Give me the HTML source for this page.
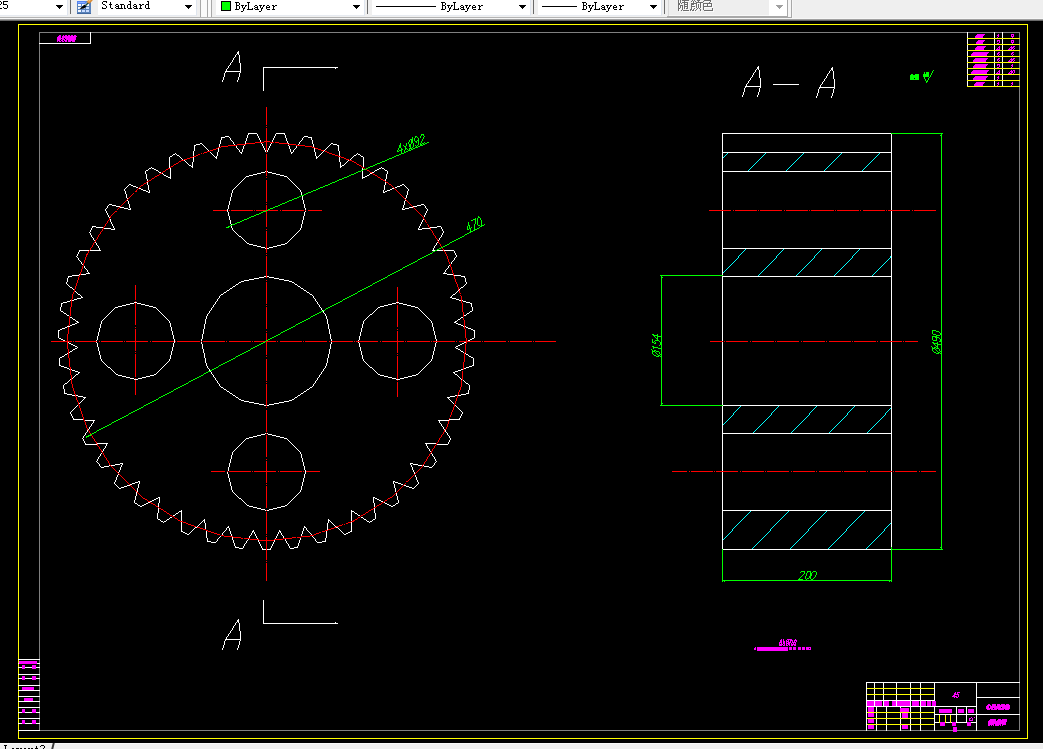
<!DOCTYPE html>
<html><head><meta charset="utf-8"><title>CAD</title>
<style>
html,body{margin:0;padding:0;background:#000;width:1043px;height:749px;overflow:hidden;font-family:"Liberation Sans",sans-serif;}
#cad{position:absolute;left:0;top:0;}
#tb{position:absolute;left:0;top:0;width:1043px;height:21px;overflow:hidden;background:linear-gradient(#efefef 0,#efefef 18px,#f6f6f6 18px,#f6f6f6 19px,#a0a0a0 19px,#a0a0a0 20px,#696969 20px,#696969 21px);}
#tb .cb{position:absolute;top:0;height:15px;background:#fff;border-right:1px solid #dfe5ee;border-bottom:1px solid #e6eaf0;box-sizing:content-box}
#tb .ul{position:absolute;left:0;top:17px;width:792px;height:1px;background:#b4b4b4}
#tb .sep{position:absolute;top:0;width:1px;height:14px;background:#6a6a6a}
#tb .grip{position:absolute;top:0;width:1px;height:17px;background:#a8a8a8}
#tb .gw{position:absolute;top:0;height:17px;background:#fafafa}
#tb .ar{position:absolute;top:5px}
#bb{position:absolute;left:0;top:743px;width:1043px;height:6px;background:linear-gradient(#f8f8f8 0,#f8f8f8 1px,#efefef 1px);overflow:hidden}
#bb .tab{position:absolute;left:52px;top:0;width:2px;height:6px;background:#3a3a3a;transform:skewX(-14deg)}
</style></head><body>
<svg id="cad" width="1043" height="749" viewBox="0 0 1043 749" shape-rendering="crispEdges" stroke-width="1" fill="none">
<path stroke="#ffff00" d="M18 24.5h1010M967 38.5h53M967 44.5h53M967 50.5h53M967 56.5h53M967 62.5h53M967 68.5h53M967 74.5h53M967 80.5h53M967 86.5h53M867 688.5h67M867 694.5h67M867 712.5h67M867 718.5h67M867 724.5h67M18 738.5h1010M18.5 25v634M18.5 660v3M18.5 664v3M18.5 668v6M18.5 675v3M18.5 679v6M18.5 686v4M18.5 691v5M18.5 697v4M18.5 702v5M18.5 708v4M18.5 713v5M18.5 719v4M18.5 724v6M18.5 731v7M939.5 715v8M945.5 715v8M950.5 715v8M1027.5 25v713"/>
<path stroke="#808080" d="M39 32.5h51M91 32.5h876M968 32.5h26M995 32.5h7M1003 32.5h17M40 730.5h826M867 730.5h9M877 730.5h9M887 730.5h13M901 730.5h9M911 730.5h9M921 730.5h13M935 730.5h18M957 730.5h19M977 730.5h43M39.5 33v10M39.5 44v615M39.5 660v3M39.5 664v3M39.5 668v6M39.5 675v3M39.5 679v6M39.5 686v4M39.5 691v5M39.5 697v4M39.5 702v5M39.5 708v4M39.5 713v5M39.5 719v4M39.5 724v6M1019.5 33v5M1019.5 39v5M1019.5 45v5M1019.5 51v5M1019.5 57v5M1019.5 63v5M1019.5 69v5M1019.5 75v5M1019.5 81v5M1019.5 87v595M1019.5 683v14M1019.5 698v16M1019.5 715v15"/>
<path stroke="#ffffff" d="M39 43.5h52M237 52.5h2M237 53.5h2M263 67.5h75M757 67.5h2M757 68.5h2M831 68.5h2M831 69.5h2M225 71.5h16M773 84.5h26M745 86.5h16M819 87.5h16M248 133.5h9M276 133.5h9M722 133.5h169M225 136.5h4M304 136.5h4M221 137.5h4M308 137.5h4M200 143.5h2M331 143.5h2M196 144.5h4M333 144.5h4M194 145.5h2M337 145.5h2M240 152.5h2M291 152.5h2M722 152.5h170M173 154.5h2M358 154.5h2M177 155.5h2M354 155.5h2M170 156.5h2M361 156.5h2M215 157.5h2M316 157.5h2M189 165.5h2M342 165.5h2M191 166.5h2M340 166.5h2M149 168.5h2M152 168.5h2M379 168.5h2M382 168.5h2M154 169.5h2M377 169.5h2M146 170.5h2M156 170.5h2M375 170.5h2M385 170.5h2M722 171.5h170M159 172.5h2M261 172.5h4M268 172.5h4M372 172.5h2M257 173.5h4M272 173.5h4M370 173.5h2M253 174.5h4M276 174.5h4M164 175.5h2M249 175.5h4M280 175.5h4M367 175.5h2M166 176.5h2M246 176.5h3M284 176.5h3M365 176.5h2M168 177.5h3M362 177.5h3M129 184.5h2M402 184.5h2M131 185.5h2M400 185.5h2M133 186.5h3M397 186.5h3M136 187.5h2M395 187.5h2M139 188.5h2M392 188.5h2M141 189.5h2M390 189.5h2M143 190.5h3M387 190.5h3M146 191.5h2M385 191.5h2M148 192.5h2M383 192.5h2M109 204.5h3M421 204.5h3M112 205.5h4M417 205.5h4M116 206.5h4M413 206.5h4M120 207.5h4M409 207.5h4M124 208.5h4M405 208.5h4M128 209.5h3M402 209.5h3M92 226.5h4M437 226.5h4M96 227.5h7M430 227.5h7M104 228.5h7M422 228.5h8M111 229.5h4M418 229.5h4M239 236.5h2M247 243.5h2M285 243.5h2M249 244.5h4M281 244.5h4M253 245.5h4M277 245.5h4M257 246.5h4M273 246.5h4M261 247.5h4M269 247.5h4M267 248.5h2M722 248.5h170M79 250.5h10M90 250.5h11M432 250.5h3M437 250.5h6M444 250.5h10M86 273.5h4M443 273.5h4M81 274.5h5M447 274.5h6M72 275.5h7M454 275.5h7M68 276.5h4M264 276.5h2M267 276.5h2M461 276.5h4M722 276.5h170M259 277.5h5M269 277.5h5M254 278.5h5M274 278.5h5M249 279.5h5M279 279.5h5M244 280.5h5M284 280.5h5M241 281.5h3M289 281.5h3M239 282.5h2M292 282.5h2M236 284.5h2M295 284.5h2M233 286.5h2M298 286.5h2M70 287.5h2M461 287.5h2M230 288.5h2M301 288.5h2M227 290.5h2M304 290.5h2M224 292.5h2M307 292.5h2M78 294.5h2M221 294.5h2M310 294.5h2M453 294.5h2M81 297.5h2M450 297.5h2M77 298.5h4M452 298.5h4M74 299.5h3M456 299.5h3M72 300.5h2M459 300.5h2M67 301.5h3M463 301.5h3M63 302.5h4M134 302.5h3M396 302.5h3M466 302.5h4M61 303.5h2M130 303.5h4M137 303.5h4M392 303.5h4M399 303.5h4M470 303.5h2M126 304.5h4M141 304.5h4M388 304.5h4M403 304.5h4M122 305.5h4M145 305.5h4M384 305.5h4M407 305.5h4M118 306.5h4M149 306.5h4M380 306.5h4M411 306.5h4M115 307.5h3M153 307.5h3M378 307.5h2M415 307.5h3M61 311.5h2M470 311.5h2M64 313.5h2M467 313.5h2M370 314.5h2M67 315.5h2M464 315.5h2M70 317.5h2M461 317.5h2M73 319.5h2M458 319.5h2M76 321.5h2M455 321.5h2M77 322.5h2M454 322.5h2M75 323.5h2M456 323.5h2M72 324.5h3M458 324.5h3M70 325.5h2M461 325.5h2M67 326.5h3M65 327.5h2M466 327.5h2M62 328.5h3M468 328.5h3M60 329.5h2M471 329.5h2M58 330.5h2M473 330.5h2M59 338.5h2M472 338.5h2M61 339.5h2M470 339.5h2M63 340.5h2M468 340.5h2M464 342.5h2M69 343.5h2M462 343.5h2M71 344.5h2M460 344.5h2M73 345.5h2M458 345.5h2M75 346.5h2M456 346.5h2M75 348.5h2M456 348.5h2M73 349.5h2M458 349.5h2M70 351.5h2M461 351.5h2M65 354.5h2M466 354.5h2M62 356.5h2M469 356.5h2M60 357.5h2M471 357.5h2M59 365.5h2M472 365.5h2M61 366.5h3M469 366.5h3M64 367.5h3M108 367.5h2M370 367.5h2M466 367.5h3M67 368.5h2M464 368.5h2M461 369.5h2M72 370.5h3M458 370.5h3M75 371.5h3M455 371.5h3M78 372.5h2M453 372.5h2M76 374.5h2M116 374.5h2M154 374.5h2M378 374.5h2M416 374.5h2M455 374.5h2M118 375.5h4M150 375.5h4M380 375.5h4M412 375.5h4M122 376.5h4M146 376.5h4M384 376.5h4M408 376.5h4M126 377.5h4M142 377.5h4M388 377.5h4M404 377.5h4M130 378.5h4M138 378.5h4M392 378.5h4M400 378.5h4M134 379.5h4M396 379.5h4M65 383.5h2M466 383.5h2M221 387.5h2M310 387.5h2M224 389.5h2M307 389.5h2M227 391.5h2M304 391.5h2M64 393.5h3M230 393.5h2M301 393.5h2M466 393.5h3M67 394.5h5M461 394.5h5M72 395.5h3M76 395.5h2M233 395.5h2M298 395.5h2M455 395.5h2M458 395.5h3M78 396.5h5M450 396.5h5M83 397.5h3M236 397.5h2M295 397.5h2M447 397.5h3M239 399.5h2M292 399.5h2M241 400.5h3M289 400.5h3M244 401.5h5M284 401.5h5M249 402.5h5M279 402.5h5M254 403.5h5M274 403.5h5M259 404.5h5M269 404.5h5M264 405.5h2M267 405.5h2M723 405.5h169M73 419.5h10M449 419.5h11M85 420.5h10M438 420.5h11M722 433.5h170M261 434.5h4M268 434.5h4M257 435.5h4M272 435.5h4M253 436.5h4M276 436.5h4M249 437.5h4M280 437.5h4M246 438.5h3M284 438.5h3M97 443.5h11M425 443.5h11M85 444.5h12M437 444.5h11M120 463.5h3M410 463.5h3M115 464.5h5M413 464.5h5M111 465.5h4M418 465.5h4M104 466.5h5M424 466.5h5M101 467.5h3M429 467.5h3M138 481.5h2M393 481.5h2M135 482.5h3M395 482.5h3M132 483.5h3M398 483.5h3M130 484.5h2M401 484.5h2M127 485.5h3M404 485.5h2M124 486.5h3M406 486.5h3M121 487.5h3M409 487.5h3M119 488.5h2M412 488.5h2M158 497.5h2M373 497.5h2M156 498.5h2M239 498.5h2M375 498.5h2M154 499.5h2M377 499.5h2M152 500.5h2M379 500.5h2M150 501.5h2M381 501.5h2M148 502.5h2M135 503.5h2M146 503.5h2M385 503.5h2M396 503.5h2M144 504.5h2M387 504.5h2M138 505.5h2M142 505.5h2M247 505.5h2M285 505.5h2M389 505.5h2M393 505.5h2M140 506.5h2M249 506.5h4M281 506.5h4M391 506.5h2M253 507.5h4M277 507.5h4M257 508.5h4M273 508.5h4M261 509.5h4M269 509.5h4M267 510.5h2M722 510.5h170M179 511.5h3M351 511.5h3M176 513.5h2M355 513.5h2M173 515.5h2M358 515.5h2M170 517.5h2M361 517.5h2M158 519.5h2M167 519.5h2M364 519.5h2M373 519.5h2M203 520.5h2M328 520.5h2M161 521.5h2M164 521.5h2M367 521.5h2M370 521.5h2M195 527.5h2M227 527.5h2M304 527.5h2M336 527.5h2M181 531.5h2M252 531.5h2M279 531.5h2M350 531.5h2M183 532.5h2M348 532.5h2M185 533.5h2M346 533.5h2M187 534.5h2M344 534.5h2M207 541.5h4M322 541.5h4M211 542.5h5M317 542.5h5M235 547.5h4M294 547.5h4M239 548.5h4M290 548.5h4M262 549.5h4M267 549.5h4M723 549.5h168M237 620.5h2M237 621.5h2M263 623.5h75M225 639.5h16M18 659.5h22M37 663.5h3M18 667.5h4M25 667.5h7M36 667.5h4M18 674.5h22M18 678.5h4M25 678.5h7M36 678.5h4M866 682.5h154M18 685.5h22M18 690.5h22M18 696.5h22M976 697.5h44M866 700.5h69M18 701.5h22M866 706.5h111M18 707.5h22M18 712.5h4M25 712.5h7M36 712.5h4M934 714.5h86M18 718.5h22M934 722.5h5M946 722.5h4M956 722.5h11M971 722.5h6M18 723.5h4M25 723.5h7M36 723.5h4M18 730.5h22M18.5 663v1M58.5 331v7M59.5 358v7M60.5 307v4M61.5 304v3M63.5 312v1M63.5 385v4M64.5 355v1M64.5 384v1M64.5 389v4M66.5 282v2M66.5 314v1M67.5 278v4M67.5 284v1M67.5 353v1M67.5 382v1M68.5 277v1M68.5 285v1M68.5 342v1M68.5 381v1M69.5 286v1M69.5 352v1M69.5 369v1M69.5 380v1M70.5 300v1M70.5 379v1M70.5 412v2M71.5 369v1M71.5 411v1M71.5 414v2M72.5 288v1M72.5 318v1M72.5 350v1M72.5 378v1M72.5 410v1M72.5 416v2M73.5 289v1M73.5 377v1M73.5 409v1M73.5 418v1M74.5 376v1M74.5 408v1M75.5 291v1M75.5 320v1M75.5 375v1M75.5 407v1M76.5 256v1M76.5 292v1M76.5 406v1M77.5 254v2M77.5 257v1M77.5 293v1M77.5 347v1M77.5 405v1M78.5 252v2M78.5 258v2M78.5 373v1M79.5 251v1M79.5 260v1M79.5 274v1M79.5 403v1M80.5 261v1M80.5 295v1M80.5 402v1M81.5 262v2M81.5 296v1M81.5 401v1M82.5 264v1M82.5 400v1M82.5 438v1M83.5 399v1M83.5 436v2M83.5 439v2M84.5 266v2M84.5 398v1M84.5 435v1M84.5 441v2M85.5 268v1M85.5 433v2M85.5 443v1M86.5 269v1M86.5 432v1M87.5 270v2M87.5 430v2M88.5 272v1M88.5 429v1M89.5 232v1M89.5 427v2M90.5 32v11M90.5 230v2M90.5 233v2M90.5 426v1M91.5 228v2M91.5 235v2M91.5 424v2M92.5 227v1M92.5 237v1M92.5 423v1M93.5 238v2M93.5 421v2M94.5 240v1M95.5 242v1M96.5 243v2M96.5 340v1M96.5 342v1M96.5 461v1M97.5 245v1M97.5 336v4M97.5 343v4M97.5 459v2M97.5 462v1M98.5 246v2M98.5 332v4M98.5 347v4M98.5 457v2M98.5 463v1M99.5 248v2M99.5 328v4M99.5 351v4M99.5 456v1M99.5 464v2M100.5 324v4M100.5 355v4M100.5 454v2M100.5 466v1M101.5 321v3M101.5 359v2M101.5 453v1M102.5 320v1M102.5 361v1M102.5 451v1M103.5 319v1M103.5 362v1M103.5 449v2M104.5 318v1M104.5 363v1M104.5 448v1M105.5 209v2M105.5 317v1M105.5 364v1M105.5 446v2M106.5 208v1M106.5 211v2M106.5 316v1M106.5 365v1M106.5 444v2M107.5 206v2M107.5 213v2M107.5 315v1M107.5 366v1M108.5 205v1M108.5 215v2M108.5 314v1M109.5 217v1M109.5 313v1M109.5 465v1M110.5 219v3M110.5 312v1M110.5 368v1M111.5 222v2M111.5 311v1M111.5 369v1M112.5 224v2M112.5 310v1M112.5 370v1M113.5 226v2M113.5 309v1M113.5 371v1M114.5 228v1M114.5 308v1M114.5 372v1M114.5 482v2M115.5 373v1M115.5 480v2M115.5 484v1M116.5 477v3M116.5 485v1M117.5 475v2M117.5 486v1M118.5 472v1M118.5 474v1M118.5 487v1M119.5 470v2M120.5 467v3M121.5 465v2M122.5 464v1M124.5 189v2M125.5 188v1M125.5 191v3M126.5 187v1M126.5 194v4M127.5 186v1M127.5 198v1M127.5 200v1M128.5 185v1M128.5 201v3M129.5 204v4M130.5 208v1M134.5 500v3M135.5 496v4M136.5 492v4M137.5 488v4M137.5 504v1M138.5 484v4M139.5 482v2M145.5 171v3M146.5 174v5M147.5 179v2M147.5 182v3M148.5 169v1M148.5 185v5M149.5 190v2M151.5 167v1M156.5 308v1M156.5 373v1M157.5 309v1M157.5 372v1M157.5 513v6M158.5 171v1M158.5 310v1M158.5 371v1M158.5 503v4M158.5 508v5M159.5 311v1M159.5 370v1M159.5 498v5M160.5 312v1M160.5 369v1M160.5 520v1M161.5 313v1M161.5 368v1M162.5 173v1M162.5 314v1M162.5 367v1M163.5 174v1M163.5 315v1M163.5 366v1M163.5 522v1M164.5 316v1M164.5 365v1M165.5 317v1M165.5 364v1M166.5 318v1M166.5 363v1M166.5 520v1M167.5 319v1M167.5 362v1M168.5 320v1M168.5 361v1M169.5 157v11M169.5 321v2M169.5 359v2M169.5 518v1M170.5 168v9M170.5 178v1M170.5 323v4M170.5 355v4M171.5 327v4M171.5 351v4M172.5 155v1M172.5 331v4M172.5 347v4M173.5 335v4M173.5 343v4M174.5 339v4M175.5 153v1M175.5 514v1M176.5 154v1M178.5 512v1M179.5 156v1M180.5 157v1M181.5 158v1M181.5 510v1M181.5 512v9M181.5 522v9M182.5 159v1M184.5 160v1M185.5 161v1M186.5 162v1M187.5 163v1M188.5 164v1M189.5 533v1M190.5 532v1M191.5 531v1M192.5 162v4M192.5 167v1M192.5 530v1M193.5 151v5M193.5 157v5M193.5 529v1M194.5 146v5M194.5 528v1M197.5 526v1M198.5 525v1M199.5 524v1M200.5 523v1M201.5 339v2M201.5 342v2M201.5 522v1M202.5 144v1M202.5 334v5M202.5 344v5M202.5 521v1M203.5 145v1M203.5 329v5M203.5 349v4M204.5 146v1M204.5 324v5M204.5 353v5M204.5 519v1M204.5 521v2M205.5 147v1M205.5 319v5M205.5 358v5M205.5 523v6M206.5 148v1M206.5 316v3M206.5 363v3M206.5 531v7M207.5 149v1M207.5 314v2M207.5 366v2M207.5 538v3M208.5 150v1M208.5 313v1M208.5 368v1M209.5 311v2M209.5 369v2M210.5 152v1M210.5 310v1M210.5 371v1M211.5 153v1M211.5 308v2M211.5 372v2M212.5 154v1M212.5 307v1M212.5 374v1M213.5 155v1M213.5 305v2M213.5 375v2M214.5 156v1M214.5 304v1M214.5 377v1M215.5 302v2M215.5 378v2M216.5 156v1M216.5 158v1M216.5 301v1M216.5 380v1M216.5 541v1M217.5 152v4M217.5 299v2M217.5 381v2M217.5 539v2M218.5 148v4M218.5 298v1M218.5 383v1M218.5 538v1M219.5 144v3M219.5 296v2M219.5 384v2M219.5 537v1M220.5 140v4M220.5 295v1M220.5 386v1M220.5 536v1M221.5 138v2M222.5 80v2M222.5 533v2M222.5 648v2M223.5 77v3M223.5 293v1M223.5 388v1M223.5 532v1M223.5 645v3M224.5 73v4M224.5 531v1M224.5 641v4M225.5 72v1M225.5 530v1M225.5 640v1M226.5 69v2M226.5 291v1M226.5 390v1M226.5 528v2M226.5 637v2M227.5 68v1M227.5 209v3M227.5 472v2M227.5 636v1M228.5 66v2M228.5 205v4M228.5 212v4M228.5 467v4M228.5 474v4M228.5 526v1M228.5 634v2M229.5 65v1M229.5 137v1M229.5 201v4M229.5 216v4M229.5 289v1M229.5 392v1M229.5 463v4M229.5 478v4M229.5 528v3M229.5 633v1M230.5 63v2M230.5 138v2M230.5 197v4M230.5 220v4M230.5 459v4M230.5 482v4M230.5 531v3M230.5 631v2M231.5 62v1M231.5 140v1M231.5 193v4M231.5 224v1M231.5 226v2M231.5 455v4M231.5 486v4M231.5 534v2M231.5 630v1M232.5 60v2M232.5 141v1M232.5 190v3M232.5 228v2M232.5 287v1M232.5 394v1M232.5 452v3M232.5 490v2M232.5 537v3M232.5 628v2M233.5 58v2M233.5 142v2M233.5 189v1M233.5 230v1M233.5 451v1M233.5 492v1M233.5 540v3M233.5 626v2M234.5 57v1M234.5 144v1M234.5 188v1M234.5 231v1M234.5 450v1M234.5 493v1M234.5 543v3M234.5 625v1M235.5 55v2M235.5 187v1M235.5 232v1M235.5 285v1M235.5 396v1M235.5 449v1M235.5 494v1M235.5 546v1M235.5 623v2M236.5 54v1M236.5 146v2M236.5 186v1M236.5 233v1M236.5 448v1M236.5 495v1M236.5 622v1M237.5 80v2M237.5 148v1M237.5 185v1M237.5 234v1M237.5 447v1M237.5 496v1M237.5 648v2M238.5 51v1M238.5 54v1M238.5 77v3M238.5 149v1M238.5 184v1M238.5 235v1M238.5 283v1M238.5 398v1M238.5 446v1M238.5 497v1M238.5 619v1M238.5 622v1M238.5 645v3M239.5 55v8M239.5 73v4M239.5 150v2M239.5 183v1M239.5 445v1M239.5 623v8M239.5 641v4M240.5 63v8M240.5 72v1M240.5 182v1M240.5 444v1M240.5 631v8M240.5 640v1M241.5 153v1M241.5 181v1M241.5 237v1M241.5 443v1M241.5 499v1M242.5 149v3M242.5 180v1M242.5 238v1M242.5 442v1M242.5 500v1M243.5 146v3M243.5 179v1M243.5 239v1M243.5 441v1M243.5 501v1M243.5 546v2M244.5 145v1M244.5 178v1M244.5 240v1M244.5 440v1M244.5 502v1M244.5 544v2M245.5 141v3M245.5 177v1M245.5 241v1M245.5 439v1M245.5 503v1M245.5 543v1M246.5 138v3M246.5 242v1M246.5 504v1M246.5 541v2M247.5 135v3M247.5 540v1M248.5 134v1M248.5 539v1M249.5 536v2M250.5 535v1M251.5 533v2M252.5 532v1M253.5 530v1M254.5 532v2M255.5 534v2M256.5 536v2M257.5 134v2M257.5 538v1M258.5 136v2M258.5 540v2M259.5 138v2M259.5 542v2M260.5 140v2M260.5 544v2M261.5 143v1M261.5 546v2M262.5 144v2M262.5 548v1M263.5 68v23M263.5 146v2M263.5 600v23M264.5 148v2M265.5 150v2M265.5 171v1M265.5 248v1M265.5 433v1M265.5 510v1M267.5 150v2M267.5 171v1M267.5 433v1M268.5 148v2M269.5 146v2M270.5 144v2M270.5 548v1M271.5 143v1M271.5 546v2M272.5 140v2M272.5 544v2M273.5 138v2M273.5 542v2M274.5 136v2M274.5 540v2M275.5 134v2M275.5 538v1M276.5 536v2M277.5 534v2M278.5 532v2M279.5 530v1M280.5 532v1M281.5 533v2M282.5 535v1M283.5 536v2M284.5 134v1M285.5 135v3M285.5 539v2M286.5 138v3M286.5 541v2M287.5 141v2M287.5 177v1M287.5 242v1M287.5 439v1M287.5 504v1M287.5 543v1M288.5 143v1M288.5 145v1M288.5 178v1M288.5 241v1M288.5 440v1M288.5 503v1M288.5 544v2M289.5 146v3M289.5 179v1M289.5 240v1M289.5 441v1M289.5 502v1M289.5 546v2M290.5 149v3M290.5 180v1M290.5 239v1M290.5 442v1M290.5 501v1M291.5 153v1M291.5 181v1M291.5 238v1M291.5 443v1M291.5 500v1M292.5 182v1M292.5 237v1M292.5 444v1M292.5 499v1M293.5 150v2M293.5 183v1M293.5 236v1M293.5 445v1M293.5 498v1M294.5 149v1M294.5 184v1M294.5 235v1M294.5 283v1M294.5 398v1M294.5 446v1M294.5 497v1M295.5 148v1M295.5 185v1M295.5 234v1M295.5 447v1M295.5 496v1M296.5 146v2M296.5 186v1M296.5 233v1M296.5 448v1M296.5 495v1M297.5 187v1M297.5 232v1M297.5 285v1M297.5 396v1M297.5 449v1M297.5 494v1M297.5 546v1M298.5 144v1M298.5 188v1M298.5 231v1M298.5 450v1M298.5 493v1M298.5 543v3M299.5 142v2M299.5 189v1M299.5 230v1M299.5 451v1M299.5 492v1M299.5 540v3M300.5 141v1M300.5 190v2M300.5 228v2M300.5 287v1M300.5 394v1M300.5 452v2M300.5 490v2M300.5 538v2M301.5 140v1M301.5 192v3M301.5 224v4M301.5 454v4M301.5 486v4M301.5 534v2M302.5 138v2M302.5 196v4M302.5 220v4M302.5 458v4M302.5 482v4M302.5 531v3M303.5 137v1M303.5 200v4M303.5 216v4M303.5 289v1M303.5 392v1M303.5 462v4M303.5 478v4M303.5 528v3M304.5 204v4M304.5 212v4M304.5 466v4M304.5 474v4M304.5 526v1M305.5 208v2M305.5 211v1M305.5 470v4M306.5 291v1M306.5 390v1M306.5 528v2M307.5 530v1M308.5 531v1M309.5 293v1M309.5 388v1M309.5 532v1M310.5 533v1M311.5 138v2M311.5 534v1M312.5 140v4M312.5 295v1M312.5 386v1M312.5 536v1M313.5 144v3M313.5 296v2M313.5 384v2M313.5 537v1M314.5 148v4M314.5 298v1M314.5 383v1M314.5 538v1M315.5 152v4M315.5 299v2M315.5 381v2M315.5 539v2M316.5 156v1M316.5 158v1M316.5 301v1M316.5 380v1M316.5 541v1M317.5 302v2M317.5 378v2M318.5 156v1M318.5 304v1M318.5 377v1M319.5 155v1M319.5 305v2M319.5 375v2M320.5 154v1M320.5 307v1M320.5 374v1M321.5 153v1M321.5 308v2M321.5 372v2M322.5 152v1M322.5 310v1M322.5 371v1M323.5 151v1M323.5 311v2M323.5 369v2M324.5 150v1M324.5 313v1M324.5 368v1M325.5 149v1M325.5 314v2M325.5 366v2M325.5 538v3M326.5 148v1M326.5 316v3M326.5 363v3M326.5 531v7M327.5 147v1M327.5 319v5M327.5 358v5M327.5 523v7M328.5 146v1M328.5 324v5M328.5 354v4M328.5 519v1M328.5 521v2M329.5 145v1M329.5 329v5M329.5 349v5M330.5 144v1M330.5 334v5M330.5 344v5M330.5 521v1M331.5 339v2M331.5 342v2M331.5 522v1M332.5 523v1M333.5 524v1M334.5 525v1M335.5 68v1M335.5 526v1M335.5 622v1M338.5 146v5M338.5 528v1M339.5 151v5M339.5 157v5M339.5 529v1M340.5 162v4M340.5 167v1M340.5 530v1M341.5 531v1M342.5 532v1M343.5 533v1M344.5 164v1M345.5 163v1M346.5 162v1M347.5 161v1M348.5 160v1M350.5 159v1M351.5 158v1M351.5 510v1M351.5 512v9M351.5 522v9M352.5 157v1M353.5 156v1M354.5 512v1M356.5 154v1M357.5 153v1M357.5 514v1M358.5 340v1M358.5 342v1M359.5 336v4M359.5 343v4M360.5 155v1M360.5 332v4M360.5 347v4M361.5 328v4M361.5 351v4M362.5 168v2M362.5 171v6M362.5 178v1M362.5 324v4M362.5 355v4M363.5 157v10M363.5 321v3M363.5 359v2M363.5 518v1M364.5 320v1M364.5 361v1M365.5 319v1M365.5 362v1M366.5 318v1M366.5 363v1M366.5 520v1M367.5 317v1M367.5 364v1M368.5 316v1M368.5 365v1M369.5 174v1M369.5 315v1M369.5 366v1M369.5 522v1M372.5 313v1M372.5 368v1M372.5 520v1M373.5 312v1M373.5 369v1M373.5 498v5M374.5 171v1M374.5 311v1M374.5 370v1M374.5 503v4M374.5 508v5M375.5 310v1M375.5 371v1M375.5 513v6M376.5 309v1M376.5 372v1M377.5 308v1M377.5 373v1M381.5 167v1M383.5 190v2M384.5 169v1M384.5 185v5M384.5 502v1M385.5 179v2M385.5 182v3M386.5 174v5M387.5 171v3M393.5 482v2M394.5 484v4M395.5 488v4M395.5 504v1M396.5 493v3M397.5 496v4M398.5 500v3M402.5 208v1M403.5 205v3M404.5 185v1M404.5 201v4M405.5 186v1M405.5 198v1M405.5 200v1M406.5 187v1M406.5 195v3M407.5 188v1M407.5 191v4M408.5 189v2M410.5 464v1M411.5 465v2M412.5 467v3M413.5 470v2M414.5 472v2M414.5 487v1M415.5 475v2M415.5 486v1M416.5 477v3M416.5 485v1M417.5 480v2M417.5 484v1M418.5 228v1M418.5 308v1M418.5 373v1M418.5 482v2M419.5 226v2M419.5 309v1M419.5 372v1M420.5 224v2M420.5 310v1M420.5 371v1M421.5 222v2M421.5 311v1M421.5 370v1M422.5 220v2M422.5 312v1M422.5 369v1M423.5 219v1M423.5 313v1M423.5 368v1M423.5 465v1M424.5 205v1M424.5 215v2M424.5 314v1M424.5 367v1M425.5 206v2M425.5 213v2M425.5 315v1M425.5 366v1M426.5 208v1M426.5 211v2M426.5 316v1M426.5 365v1M426.5 444v2M427.5 209v2M427.5 317v1M427.5 364v1M427.5 446v2M428.5 318v1M428.5 363v1M428.5 448v1M429.5 319v1M429.5 362v1M429.5 449v2M430.5 320v1M430.5 361v1M430.5 451v1M431.5 321v2M431.5 359v2M431.5 453v1M432.5 323v4M432.5 355v4M432.5 454v2M432.5 466v1M433.5 248v2M433.5 327v4M433.5 351v4M433.5 456v1M433.5 465v1M434.5 246v2M434.5 331v4M434.5 347v4M434.5 457v2M434.5 463v2M435.5 245v1M435.5 335v4M435.5 343v4M435.5 459v2M435.5 462v1M436.5 243v2M436.5 339v2M436.5 342v1M436.5 461v1M437.5 242v1M438.5 240v1M439.5 238v2M439.5 421v2M440.5 237v1M440.5 423v1M441.5 227v2M441.5 235v2M441.5 424v2M442.5 229v2M442.5 233v2M442.5 426v1M443.5 231v2M443.5 427v2M444.5 272v1M444.5 429v1M445.5 270v2M445.5 430v2M446.5 269v1M446.5 432v1M447.5 268v1M447.5 433v2M448.5 266v2M448.5 398v1M448.5 435v1M448.5 442v2M449.5 265v1M449.5 399v1M449.5 436v2M449.5 440v2M450.5 400v1M450.5 438v2M451.5 262v2M451.5 296v1M451.5 401v1M452.5 261v1M452.5 295v1M452.5 402v1M453.5 260v1M453.5 403v1M454.5 251v2M454.5 258v2M454.5 373v1M455.5 253v2M455.5 257v1M455.5 293v1M455.5 347v1M455.5 405v1M456.5 255v2M456.5 292v1M456.5 406v1M457.5 291v1M457.5 320v1M457.5 375v1M457.5 407v1M458.5 290v1M458.5 376v1M458.5 408v1M459.5 289v1M459.5 377v1M459.5 409v1M459.5 418v1M460.5 288v1M460.5 318v1M460.5 350v1M460.5 378v1M460.5 410v1M460.5 416v2M461.5 379v1M461.5 411v1M461.5 414v2M462.5 300v1M462.5 412v2M463.5 286v1M463.5 326v1M463.5 352v1M463.5 380v1M464.5 277v1M464.5 285v1M464.5 381v1M465.5 278v4M465.5 284v1M465.5 326v1M465.5 353v1M465.5 382v1M466.5 282v2M466.5 314v1M468.5 355v1M468.5 384v1M468.5 390v3M469.5 312v1M469.5 385v5M471.5 304v3M472.5 307v4M473.5 358v7M474.5 331v7M722.5 134v18M722.5 153v18M722.5 172v38M722.5 211v37M722.5 249v26M722.5 277v64M722.5 342v63M722.5 406v27M722.5 434v37M722.5 472v38M722.5 511v38M742.5 95v2M743.5 92v3M744.5 88v4M745.5 87v1M746.5 84v2M747.5 83v1M748.5 81v2M749.5 80v1M750.5 78v2M751.5 77v1M752.5 75v2M753.5 73v2M754.5 72v1M755.5 70v2M756.5 69v1M757.5 95v2M758.5 66v1M758.5 69v1M758.5 92v3M759.5 70v8M759.5 88v4M760.5 78v8M760.5 87v1M816.5 96v2M817.5 93v3M818.5 89v4M819.5 88v1M820.5 85v2M821.5 84v1M822.5 82v2M823.5 81v1M824.5 79v2M825.5 78v1M826.5 76v2M827.5 74v2M828.5 73v1M829.5 71v2M830.5 70v1M831.5 96v2M832.5 67v1M832.5 70v1M832.5 93v3M833.5 71v8M833.5 89v4M834.5 79v8M834.5 88v1M866.5 683v17M866.5 701v5M866.5 707v24M874.5 683v5M874.5 689v5M874.5 695v5M874.5 701v5M876.5 707v5M876.5 713v5M876.5 719v5M876.5 725v6M883.5 683v5M883.5 689v5M883.5 695v5M883.5 701v5M886.5 707v5M886.5 713v5M886.5 719v5M886.5 725v6M891.5 134v18M891.5 153v18M891.5 172v38M891.5 211v37M891.5 249v27M891.5 277v64M891.5 342v63M891.5 406v27M891.5 434v37M891.5 472v38M891.5 511v36M896.5 683v5M896.5 689v5M896.5 695v5M896.5 701v5M900.5 707v1M900.5 713v5M900.5 719v5M900.5 725v6M910.5 683v5M910.5 689v5M910.5 695v5M910.5 701v5M910.5 707v5M910.5 713v5M910.5 719v5M910.5 725v6M920.5 683v5M920.5 689v5M920.5 695v5M920.5 701v5M920.5 707v5M920.5 713v5M920.5 719v5M920.5 725v6M934.5 683v17M934.5 707v7M934.5 715v7M934.5 723v8M951.5 722v1M956.5 707v7M956.5 715v7M966.5 707v7M966.5 715v7M967.5 32v6M967.5 39v5M967.5 45v5M967.5 51v5M967.5 57v5M967.5 63v5M967.5 69v5M967.5 75v5M967.5 81v5M976.5 683v14M976.5 698v8M976.5 707v7M976.5 715v7M976.5 723v8M994.5 32v6M994.5 39v5M994.5 45v5M994.5 51v5M994.5 57v5M994.5 63v5M994.5 69v5M994.5 75v5M994.5 81v5M1002.5 32v6M1002.5 39v5M1002.5 45v5M1002.5 51v5M1002.5 57v5M1002.5 63v5M1002.5 69v5M1002.5 75v5M1002.5 81v5"/>
<path stroke="#ff00ff" d="M977 34.5h8M1011 34.5h3M59 35.5h2M65 35.5h2M68 35.5h2M71 35.5h2M74 35.5h2M976 35.5h8M997 35.5h2M58 36.5h3M62 36.5h15M975 36.5h8M1011 36.5h3M57 37.5h4M62 37.5h14M975 37.5h8M57 38.5h7M65 38.5h11M57 39.5h4M62 39.5h3M66 39.5h10M57 40.5h3M61 40.5h2M64 40.5h3M68 40.5h7M978 40.5h7M997 40.5h3M1011 40.5h3M59 41.5h2M62 41.5h2M65 41.5h2M68 41.5h3M72 41.5h3M977 41.5h7M976 42.5h7M1011 42.5h3M976 43.5h7M997 43.5h2M977 46.5h9M1013 46.5h2M976 47.5h9M998 47.5h2M1010 47.5h4M975 48.5h9M1011 48.5h2M975 49.5h9M996 49.5h4M1008 49.5h4M973 52.5h16M998 52.5h2M1012 52.5h2M972 53.5h16M997 53.5h2M1011 53.5h2M971 54.5h16M971 55.5h16M975 58.5h13M998 58.5h2M1013 58.5h2M974 59.5h13M997 59.5h2M1010 59.5h4M973 60.5h13M1011 60.5h2M973 61.5h13M1008 61.5h4M975 64.5h13M997 64.5h3M974 65.5h13M1011 65.5h2M973 66.5h13M973 67.5h13M997 67.5h2M973 70.5h16M1013 70.5h2M972 71.5h16M998 71.5h2M1010 71.5h3M971 72.5h16M1011 72.5h2M971 73.5h16M996 73.5h4M1008 73.5h4M975 76.5h13M974 77.5h13M997 77.5h2M973 78.5h13M973 79.5h13M976 82.5h9M975 83.5h9M997 83.5h2M1011 83.5h2M974 84.5h9M974 85.5h9M787 639.5h5M780 640.5h2M790 640.5h3M794 640.5h3M780 641.5h2M783 641.5h2M786 641.5h3M779 642.5h3M783 642.5h2M788 642.5h3M792 642.5h4M783 643.5h2M786 643.5h4M779 644.5h4M788 644.5h2M791 644.5h5M779 645.5h3M783 645.5h2M786 645.5h2M791 645.5h2M794 645.5h2M757 647.5h31M789 647.5h3M793 647.5h3M798 647.5h3M802 647.5h3M806 647.5h5M754 648.5h2M757 648.5h31M789 648.5h3M793 648.5h3M798 648.5h3M802 648.5h3M806 648.5h3M754 649.5h2M757 649.5h31M789 649.5h3M793 649.5h3M798 649.5h3M802 649.5h3M806 649.5h5M757 650.5h31M19 661.5h18M19 662.5h18M19 663.5h18M22 665.5h3M32 665.5h4M22 666.5h3M32 666.5h4M22 667.5h3M32 667.5h4M22 668.5h3M32 668.5h4M22 676.5h3M32 676.5h4M22 677.5h3M32 677.5h4M22 678.5h3M32 678.5h4M22 679.5h3M32 679.5h4M22 687.5h12M22 688.5h12M22 689.5h12M957 692.5h3M954 693.5h2M954 694.5h5M953 695.5h2M952 696.5h5M956 697.5h2M24 698.5h9M24 699.5h9M24 700.5h9M867 701.5h7M875 701.5h7M884 701.5h5M892 701.5h4M897 701.5h13M912 701.5h7M921 701.5h5M927 701.5h4M932 701.5h4M867 702.5h7M875 702.5h7M884 702.5h5M892 702.5h4M897 702.5h13M912 702.5h7M921 702.5h5M927 702.5h4M932 702.5h4M867 703.5h7M875 703.5h7M884 703.5h5M892 703.5h4M897 703.5h13M912 703.5h7M921 703.5h5M927 703.5h4M932 703.5h4M867 704.5h7M875 704.5h7M884 704.5h5M892 704.5h4M897 704.5h13M912 704.5h7M921 704.5h5M927 704.5h4M932 704.5h4M988 704.5h2M992 704.5h4M997 704.5h3M1001 704.5h4M1006 704.5h3M867 705.5h7M875 705.5h7M884 705.5h5M892 705.5h4M897 705.5h13M912 705.5h7M921 705.5h5M927 705.5h4M932 705.5h4M987 705.5h4M992 705.5h4M997 705.5h13M986 706.5h3M990 706.5h20M868 707.5h6M986 707.5h3M990 707.5h11M1002 707.5h8M868 708.5h6M900 708.5h9M986 708.5h7M994 708.5h16M22 709.5h3M32 709.5h4M868 709.5h6M900 709.5h9M939 709.5h13M958 709.5h6M968 709.5h6M987 709.5h3M991 709.5h6M998 709.5h6M1005 709.5h4M22 710.5h3M32 710.5h4M868 710.5h6M900 710.5h9M939 710.5h13M958 710.5h6M968 710.5h6M22 711.5h3M32 711.5h4M868 711.5h6M900 711.5h9M939 711.5h13M958 711.5h6M968 711.5h6M22 712.5h3M32 712.5h4M939 712.5h13M958 712.5h6M968 712.5h6M868 713.5h6M902 713.5h6M868 714.5h6M902 714.5h6M868 715.5h6M902 715.5h6M868 716.5h6M902 716.5h6M902 717.5h6M969 718.5h2M868 719.5h6M990 719.5h6M998 719.5h3M1002 719.5h5M22 720.5h3M32 720.5h4M868 720.5h6M969 720.5h4M989 720.5h7M997 720.5h10M22 721.5h3M32 721.5h4M868 721.5h6M988 721.5h19M22 722.5h3M32 722.5h4M868 722.5h6M940 722.5h5M952 722.5h4M967 722.5h4M988 722.5h18M22 723.5h3M32 723.5h4M940 723.5h5M952 723.5h4M967 723.5h4M988 723.5h18M940 724.5h5M952 724.5h4M967 724.5h4M988 724.5h6M995 724.5h6M1002 724.5h4M868 725.5h6M902 725.5h6M940 725.5h5M952 725.5h4M967 725.5h4M988 725.5h2M995 725.5h4M868 726.5h6M902 726.5h6M868 727.5h6M902 727.5h6M953 727.5h4M868 728.5h6M902 728.5h6M953 728.5h4M953 729.5h4M953 730.5h4M953 731.5h4M57.5 41v1M63.5 35v1M755.5 647v1M779.5 643v1M781.5 639v1M781.5 643v1M783.5 639v2M784.5 644v1M786.5 640v1M786.5 642v1M786.5 644v1M788.5 640v1M789.5 645v1M790.5 641v1M791.5 643v1M792.5 641v1M793.5 643v1M794.5 641v1M795.5 639v1M795.5 643v1M796.5 641v1M810.5 648v1M954.5 697v1M955.5 692v1M957.5 693v1M958.5 695v2M969.5 719v1M971.5 717v1M972.5 718v2M974.5 717v1M991.5 725v1M993.5 725v1M997.5 37v1M997.5 41v1M997.5 48v1M997.5 54v1M997.5 60v1M997.5 65v1M997.5 72v1M997.5 79v1M997.5 85v1M998.5 34v1M998.5 36v1M998.5 55v1M998.5 61v1M998.5 76v1M998.5 78v1M998.5 82v1M998.5 84v1M999.5 41v2M999.5 46v1M999.5 48v1M999.5 54v1M999.5 60v1M999.5 65v2M999.5 70v1M999.5 72v1M1000.5 725v1M1002.5 725v1M1009.5 48v1M1009.5 60v1M1009.5 72v1M1011.5 35v1M1011.5 41v1M1011.5 46v1M1011.5 54v1M1011.5 58v1M1011.5 67v1M1011.5 70v1M1011.5 85v1M1012.5 37v1M1012.5 43v1M1012.5 55v1M1012.5 64v1M1012.5 66v1M1012.5 82v1M1012.5 84v1M1013.5 35v1M1013.5 41v1M1013.5 49v1M1013.5 54v1M1013.5 61v1M1013.5 73v1M1014.5 48v1M1014.5 60v1M1014.5 71v2"/>
<path stroke="#00ff00" d="M926 72.5h3M926 73.5h3M911 74.5h2M915 74.5h4M923 74.5h6M910 75.5h9M923 75.5h6M910 76.5h9M923 76.5h6M910 77.5h9M910 78.5h4M915 78.5h4M910 79.5h9M926 81.5h2M891 133.5h52M421 134.5h3M940 135.5h2M415 136.5h2M410 139.5h3M411 140.5h2M417 140.5h2M411 141.5h2M415 141.5h2M411 142.5h2M427 142.5h2M422 143.5h2M425 143.5h2M409 144.5h2M420 144.5h2M423 144.5h2M399 145.5h2M409 145.5h2M420 145.5h3M399 146.5h2M404 146.5h2M409 146.5h2M418 146.5h2M399 147.5h2M415 147.5h3M405 148.5h2M409 148.5h3M413 148.5h2M401 149.5h2M411 149.5h2M399 150.5h3M408 150.5h3M397 151.5h2M406 151.5h2M404 152.5h2M401 153.5h3M399 154.5h2M396 155.5h3M394 156.5h2M392 157.5h2M389 158.5h3M387 159.5h2M385 160.5h2M382 161.5h3M380 162.5h2M377 163.5h3M375 164.5h2M373 165.5h2M370 166.5h3M368 167.5h2M366 168.5h2M363 169.5h3M361 170.5h2M358 171.5h3M356 172.5h2M354 173.5h2M351 174.5h3M349 175.5h2M347 176.5h2M344 177.5h3M342 178.5h2M339 179.5h3M337 180.5h2M335 181.5h2M332 182.5h3M330 183.5h2M328 184.5h2M325 185.5h3M323 186.5h2M320 187.5h3M318 188.5h2M316 189.5h2M313 190.5h3M311 191.5h2M308 192.5h3M306 193.5h2M304 194.5h2M301 195.5h3M299 196.5h2M297 197.5h2M294 198.5h3M292 199.5h2M289 200.5h3M287 201.5h2M285 202.5h2M282 203.5h3M280 204.5h2M278 205.5h2M275 206.5h3M273 207.5h2M270 208.5h3M268 209.5h2M266 210.5h2M263 211.5h3M261 212.5h2M259 213.5h2M256 214.5h3M254 215.5h2M251 216.5h3M249 217.5h2M478 217.5h2M247 218.5h2M244 219.5h3M473 219.5h3M242 220.5h2M471 220.5h2M240 221.5h2M237 222.5h3M235 223.5h2M232 224.5h3M230 225.5h2M468 225.5h2M478 225.5h2M481 225.5h3M228 226.5h2M480 226.5h2M226 227.5h3M469 228.5h2M477 228.5h2M467 229.5h2M474 229.5h3M473 230.5h2M470 231.5h3M469 232.5h2M467 233.5h2M465 234.5h2M462 236.5h2M460 237.5h2M458 238.5h2M456 239.5h2M454 240.5h2M452 241.5h2M450 242.5h2M447 244.5h2M445 245.5h2M443 246.5h2M441 247.5h2M439 248.5h2M437 249.5h2M435 250.5h2M433 251.5h2M430 253.5h2M428 254.5h2M426 255.5h2M424 256.5h2M422 257.5h2M420 258.5h2M418 259.5h2M415 261.5h2M413 262.5h2M411 263.5h2M409 264.5h2M407 265.5h2M405 266.5h2M403 267.5h2M400 269.5h2M398 270.5h2M396 271.5h2M394 272.5h2M392 273.5h2M390 274.5h2M388 275.5h2M660 275.5h63M385 277.5h2M661 277.5h2M383 278.5h2M381 279.5h2M379 280.5h2M377 281.5h2M375 282.5h2M373 283.5h2M370 285.5h2M368 286.5h2M366 287.5h2M364 288.5h2M362 289.5h2M360 290.5h2M358 291.5h2M355 293.5h2M353 294.5h2M351 295.5h2M349 296.5h2M347 297.5h2M345 298.5h2M343 299.5h2M340 301.5h2M338 302.5h2M336 303.5h2M334 304.5h2M332 305.5h2M330 306.5h2M328 307.5h2M326 308.5h2M323 310.5h2M321 311.5h2M319 312.5h2M317 313.5h2M315 314.5h2M313 315.5h2M311 316.5h2M308 318.5h2M306 319.5h2M304 320.5h2M302 321.5h2M300 322.5h2M298 323.5h2M296 324.5h2M293 326.5h2M291 327.5h2M289 328.5h2M287 329.5h2M285 330.5h2M932 330.5h4M283 331.5h2M936 331.5h3M281 332.5h2M940 333.5h2M278 334.5h2M652 334.5h2M933 334.5h3M940 334.5h2M276 335.5h2M653 335.5h5M936 335.5h4M274 336.5h2M657 336.5h5M932 336.5h5M272 337.5h2M935 337.5h4M270 338.5h2M656 338.5h2M268 339.5h2M940 339.5h2M266 340.5h2M655 340.5h4M933 340.5h4M940 340.5h2M939 341.5h3M263 342.5h2M652 342.5h2M660 342.5h2M932 342.5h2M261 343.5h2M654 343.5h2M660 343.5h2M933 343.5h5M259 344.5h2M660 344.5h2M937 344.5h5M257 345.5h2M255 346.5h2M652 346.5h2M936 346.5h2M253 347.5h2M653 347.5h5M934 347.5h2M251 348.5h2M658 348.5h4M932 348.5h3M936 348.5h3M248 350.5h2M654 350.5h2M246 351.5h2M652 351.5h3M656 351.5h3M940 351.5h2M244 352.5h2M934 352.5h2M938 352.5h2M242 353.5h2M936 353.5h3M940 353.5h2M240 354.5h2M660 354.5h2M238 355.5h2M654 355.5h2M658 355.5h2M236 356.5h2M656 356.5h3M660 356.5h2M233 358.5h2M231 359.5h2M229 360.5h2M227 361.5h2M225 362.5h2M223 363.5h2M221 364.5h2M219 365.5h2M216 367.5h2M214 368.5h2M212 369.5h2M210 370.5h2M208 371.5h2M206 372.5h2M204 373.5h2M201 375.5h2M199 376.5h2M197 377.5h2M195 378.5h2M193 379.5h2M191 380.5h2M189 381.5h2M186 383.5h2M184 384.5h2M182 385.5h2M180 386.5h2M178 387.5h2M176 388.5h2M174 389.5h2M171 391.5h2M169 392.5h2M167 393.5h2M165 394.5h2M163 395.5h2M161 396.5h2M159 397.5h2M156 399.5h2M154 400.5h2M152 401.5h2M150 402.5h2M148 403.5h2M661 403.5h2M146 404.5h2M144 405.5h2M660 405.5h63M141 407.5h2M139 408.5h2M137 409.5h2M135 410.5h2M133 411.5h2M131 412.5h2M129 413.5h2M126 415.5h2M124 416.5h2M122 417.5h2M120 418.5h2M118 419.5h2M116 420.5h2M114 421.5h2M112 422.5h2M109 424.5h2M107 425.5h2M105 426.5h2M103 427.5h2M101 428.5h2M99 429.5h2M97 430.5h2M94 432.5h2M92 433.5h2M90 434.5h2M88 435.5h3M86 436.5h3M940 547.5h2M891 549.5h52M801 571.5h4M807 571.5h4M813 571.5h3M810 573.5h2M810 574.5h2M810 575.5h2M809 576.5h2M809 577.5h2M807 578.5h2M798 579.5h5M811 579.5h2M722 580.5h170M86.5 437v1M96.5 431v1M111.5 423v1M128.5 414v1M143.5 406v1M158.5 398v1M173.5 390v1M188.5 382v1M203.5 374v1M218.5 366v1M235.5 357v1M250.5 349v1M265.5 341v1M280.5 333v1M295.5 325v1M310.5 317v1M325.5 309v1M342.5 300v1M357.5 292v1M372.5 284v1M387.5 276v1M397.5 150v1M398.5 148v2M400.5 143v2M401.5 148v1M401.5 151v2M402.5 268v1M403.5 145v1M404.5 150v2M405.5 147v1M405.5 149v1M406.5 143v3M407.5 149v1M408.5 142v2M409.5 140v2M409.5 149v1M410.5 147v1M411.5 143v1M412.5 137v2M412.5 147v1M413.5 143v4M414.5 138v3M415.5 137v1M415.5 145v1M416.5 142v1M416.5 146v1M417.5 137v1M417.5 145v1M417.5 260v1M418.5 138v2M418.5 141v4M420.5 136v2M420.5 143v1M421.5 135v1M421.5 141v2M422.5 139v2M423.5 135v1M423.5 137v2M424.5 136v1M424.5 142v1M432.5 252v1M449.5 243v1M464.5 235v1M467.5 226v3M468.5 222v3M469.5 226v2M470.5 229v2M471.5 227v1M474.5 224v5M475.5 218v1M475.5 220v4M477.5 218v7M478.5 216v1M479.5 227v1M480.5 218v2M481.5 220v5M484.5 224v1M651.5 349v1M652.5 339v3M652.5 350v1M652.5 352v2M653.5 348v1M653.5 354v1M654.5 336v1M654.5 341v1M655.5 337v1M655.5 342v1M655.5 352v1M656.5 353v1M657.5 334v1M657.5 337v1M657.5 339v1M657.5 354v1M659.5 341v1M659.5 345v1M659.5 352v2M661.5 276v1M661.5 278v58M661.5 337v5M661.5 345v3M661.5 349v5M661.5 355v1M661.5 357v46M661.5 404v1M722.5 549v31M722.5 581v1M724.5 581v1M799.5 578v1M800.5 572v1M800.5 577v1M801.5 576v1M802.5 575v1M803.5 574v1M804.5 572v2M805.5 576v3M806.5 573v3M806.5 579v1M807.5 572v1M810.5 572v1M810.5 578v1M812.5 572v1M813.5 578v1M814.5 577v1M815.5 575v2M816.5 572v3M889.5 581v1M891.5 547v2M891.5 550v30M891.5 581v1M924.5 72v2M924.5 77v2M925.5 79v2M926.5 82v1M927.5 80v1M928.5 78v2M929.5 77v1M930.5 75v2M931.5 73v2M931.5 346v1M932.5 71v2M932.5 331v3M932.5 337v3M932.5 347v1M932.5 349v2M933.5 70v1M933.5 351v1M934.5 344v1M935.5 345v1M935.5 349v1M936.5 338v2M936.5 350v1M937.5 342v1M937.5 345v1M937.5 347v1M937.5 351v1M939.5 332v1M939.5 338v1M939.5 349v2M941.5 134v1M941.5 136v197M941.5 335v4M941.5 342v2M941.5 345v6M941.5 352v1M941.5 354v193M941.5 548v1"/>
<path stroke="#ff0000" d="M264 141.5h6M255 142.5h9M270 142.5h4M275 142.5h4M246 143.5h9M279 143.5h9M237 144.5h9M288 144.5h8M228 145.5h9M296 145.5h9M221 146.5h7M305 146.5h7M218 147.5h3M312 147.5h3M216 148.5h2M315 148.5h3M213 149.5h3M318 149.5h3M210 150.5h3M321 150.5h3M207 151.5h3M325 151.5h2M204 152.5h3M327 152.5h2M329 153.5h3M198 154.5h2M332 154.5h3M196 155.5h2M335 155.5h3M193 156.5h3M338 156.5h3M190 157.5h3M341 157.5h3M187 158.5h3M344 158.5h2M184 159.5h3M346 159.5h3M181 160.5h3M349 160.5h3M179 161.5h2M352 161.5h2M354 162.5h2M176 163.5h2M174 164.5h2M357 164.5h2M359 165.5h2M171 166.5h2M362 167.5h2M168 168.5h2M166 169.5h2M367 170.5h2M163 171.5h2M370 172.5h2M160 173.5h2M373 174.5h2M157 175.5h2M375 175.5h2M155 176.5h2M378 177.5h2M152 178.5h2M381 179.5h2M149 180.5h2M383 180.5h2M147 181.5h2M386 182.5h2M144 183.5h2M389 184.5h2M141 185.5h2M135 191.5h2M213 210.5h14M231 210.5h22M256 210.5h10M268 210.5h10M282 210.5h22M308 210.5h14M709 210.5h22M735 210.5h22M760 210.5h22M786 210.5h22M811 210.5h23M837 210.5h22M863 210.5h22M888 210.5h22M914 210.5h22M115 211.5h2M86 254.5h2M51 341.5h21M75 341.5h22M101 341.5h22M126 341.5h22M152 341.5h22M177 341.5h23M203 341.5h22M229 341.5h22M254 341.5h11M266 341.5h10M280 341.5h22M305 341.5h22M331 341.5h22M356 341.5h22M382 341.5h22M407 341.5h23M433 341.5h22M459 341.5h22M484 341.5h22M510 341.5h22M535 341.5h21M710 341.5h13M726 341.5h22M752 341.5h22M777 341.5h22M803 341.5h22M829 341.5h22M854 341.5h22M880 341.5h22M905 341.5h13M211 471.5h14M229 471.5h22M254 471.5h22M280 471.5h22M306 471.5h14M672 471.5h15M691 471.5h22M716 471.5h22M742 471.5h22M767 471.5h22M793 471.5h22M819 471.5h22M844 471.5h22M870 471.5h22M895 471.5h22M921 471.5h15M406 481.5h2M390 497.5h2M143 498.5h2M388 498.5h2M145 499.5h2M385 500.5h2M148 501.5h2M382 502.5h2M151 503.5h2M153 504.5h2M379 504.5h2M377 505.5h2M156 506.5h2M374 507.5h2M159 508.5h2M161 509.5h2M371 509.5h2M369 510.5h2M164 511.5h2M366 512.5h2M167 513.5h2M363 514.5h2M170 515.5h2M361 515.5h2M172 516.5h2M358 517.5h2M175 518.5h2M355 519.5h2M178 520.5h2M353 520.5h2M180 521.5h3M351 521.5h3M183 522.5h3M348 522.5h3M186 523.5h2M346 523.5h2M188 524.5h3M191 525.5h3M339 525.5h3M194 526.5h2M336 526.5h3M197 527.5h3M334 527.5h2M200 528.5h3M331 528.5h3M203 529.5h3M328 529.5h3M206 530.5h2M325 530.5h3M208 531.5h3M322 531.5h3M211 532.5h3M319 532.5h2M214 533.5h3M316 533.5h3M217 534.5h3M314 534.5h2M221 535.5h3M310 535.5h4M224 536.5h9M301 536.5h9M233 537.5h8M292 537.5h4M297 537.5h4M241 538.5h2M244 538.5h6M283 538.5h9M250 539.5h9M274 539.5h9M259 540.5h15M67.5 334v7M67.5 342v7M68.5 325v1M68.5 327v7M68.5 349v9M69.5 316v9M69.5 358v9M70.5 307v9M70.5 367v8M71.5 299v8M71.5 375v9M72.5 294v5M72.5 384v4M73.5 292v2M73.5 341v1M73.5 388v3M74.5 289v3M74.5 391v3M75.5 286v3M75.5 394v3M76.5 283v3M76.5 397v3M77.5 280v3M77.5 400v2M78.5 277v3M78.5 402v3M79.5 275v2M79.5 405v3M80.5 272v3M80.5 408v3M81.5 269v3M81.5 411v3M82.5 266v3M82.5 414v3M83.5 263v3M83.5 417v3M84.5 260v3M84.5 420v2M85.5 257v3M85.5 422v3M86.5 255v2M86.5 425v3M87.5 253v1M87.5 428v2M88.5 251v2M88.5 430v1M89.5 250v1M89.5 431v2M90.5 248v2M90.5 433v1M91.5 247v1M91.5 435v1M92.5 245v2M92.5 436v2M93.5 243v2M93.5 438v1M94.5 242v1M94.5 439v2M95.5 240v2M95.5 441v1M96.5 239v1M96.5 442v2M97.5 237v2M97.5 444v2M98.5 235v2M98.5 446v1M99.5 234v1M99.5 341v1M99.5 447v2M100.5 232v2M100.5 449v1M101.5 231v1M101.5 450v2M102.5 229v2M102.5 452v1M103.5 227v2M103.5 453v2M104.5 226v1M104.5 455v2M105.5 224v2M105.5 457v1M106.5 223v1M106.5 458v2M107.5 221v2M107.5 460v1M108.5 220v1M108.5 461v2M109.5 218v2M109.5 463v2M110.5 216v2M110.5 465v1M111.5 215v1M111.5 466v1M112.5 214v1M112.5 467v1M113.5 213v1M113.5 468v1M114.5 212v1M114.5 469v1M115.5 470v1M116.5 471v1M117.5 209v1M117.5 472v1M118.5 208v1M118.5 473v1M119.5 207v1M119.5 474v1M120.5 206v1M120.5 475v1M121.5 205v1M121.5 476v1M122.5 204v1M122.5 477v1M123.5 203v1M123.5 478v1M124.5 202v1M124.5 341v1M124.5 479v1M125.5 201v1M125.5 480v1M126.5 200v1M126.5 481v1M127.5 199v1M127.5 482v1M128.5 198v1M128.5 483v1M129.5 197v1M129.5 484v1M130.5 196v1M130.5 485v1M131.5 195v1M131.5 486v1M132.5 194v1M132.5 487v1M133.5 193v1M133.5 488v1M134.5 489v1M135.5 285v15M135.5 301v1M135.5 303v22M135.5 327v1M135.5 329v12M135.5 342v9M135.5 352v1M135.5 354v23M135.5 378v1M135.5 380v15M135.5 490v1M136.5 190v1M136.5 491v1M137.5 189v1M137.5 492v1M138.5 188v1M138.5 493v1M139.5 187v1M139.5 494v1M140.5 186v1M140.5 495v1M141.5 496v1M142.5 497v1M143.5 184v1M146.5 182v1M147.5 500v1M150.5 341v1M150.5 502v1M151.5 179v1M154.5 177v1M155.5 505v1M158.5 507v1M159.5 174v1M162.5 172v1M163.5 510v1M165.5 170v1M166.5 512v1M169.5 514v1M170.5 167v1M173.5 165v1M174.5 517v1M175.5 341v1M177.5 519v1M178.5 162v1M201.5 153v1M201.5 341v1M203.5 153v1M226.5 341v1M227.5 471v1M229.5 210v1M252.5 341v1M252.5 471v1M254.5 210v1M266.5 107v18M266.5 126v1M266.5 128v13M266.5 142v9M266.5 152v1M266.5 154v22M266.5 177v1M266.5 180v22M266.5 203v1M266.5 205v5M266.5 211v16M266.5 229v1M266.5 231v22M266.5 254v1M266.5 256v22M266.5 280v1M266.5 282v22M266.5 305v1M266.5 307v22M266.5 331v1M266.5 333v7M266.5 342v13M266.5 356v1M266.5 359v22M266.5 382v1M266.5 384v22M266.5 407v1M266.5 410v22M266.5 433v1M266.5 435v22M266.5 459v1M266.5 461v10M266.5 472v11M266.5 484v1M266.5 486v22M266.5 510v1M266.5 512v22M266.5 535v1M266.5 537v3M266.5 541v19M266.5 561v1M266.5 563v18M277.5 341v1M278.5 471v1M280.5 210v1M303.5 341v1M303.5 471v1M305.5 210v1M329.5 341v1M342.5 524v1M344.5 524v1M354.5 341v1M356.5 163v1M357.5 518v1M360.5 516v1M361.5 166v1M364.5 168v1M365.5 513v1M366.5 169v1M368.5 511v1M369.5 171v1M372.5 173v1M373.5 508v1M376.5 506v1M377.5 176v1M380.5 178v1M380.5 341v1M381.5 503v1M384.5 501v1M385.5 181v1M387.5 499v1M388.5 183v1M391.5 185v1M392.5 186v1M392.5 496v1M393.5 187v1M393.5 495v1M394.5 188v1M394.5 494v1M395.5 189v1M395.5 493v1M396.5 190v1M396.5 492v1M397.5 191v1M397.5 287v15M397.5 303v1M397.5 305v22M397.5 329v1M397.5 331v10M397.5 342v11M397.5 354v1M397.5 356v23M397.5 380v1M397.5 382v15M397.5 491v1M398.5 192v1M398.5 490v1M399.5 193v1M399.5 489v1M400.5 194v1M400.5 488v1M401.5 195v1M401.5 487v1M402.5 196v1M402.5 486v1M403.5 197v1M403.5 485v1M404.5 198v1M404.5 484v1M405.5 199v1M405.5 341v1M405.5 483v1M406.5 200v1M407.5 201v1M408.5 202v1M408.5 480v1M409.5 203v1M409.5 479v1M410.5 204v1M410.5 478v1M411.5 205v1M411.5 477v1M412.5 206v1M412.5 476v1M413.5 207v1M413.5 475v1M414.5 208v1M414.5 474v1M415.5 209v1M415.5 473v1M416.5 210v1M416.5 472v1M417.5 211v1M417.5 471v1M418.5 212v1M418.5 470v1M419.5 213v1M419.5 469v1M420.5 214v1M420.5 468v1M421.5 215v1M421.5 467v1M422.5 216v1M422.5 465v2M423.5 217v2M423.5 464v1M424.5 219v1M424.5 462v2M425.5 220v2M425.5 461v1M426.5 222v1M426.5 459v2M427.5 224v1M427.5 457v2M428.5 225v2M428.5 456v1M429.5 227v1M429.5 454v2M430.5 228v2M430.5 453v1M431.5 230v1M431.5 341v1M431.5 451v2M432.5 231v2M432.5 449v2M433.5 233v2M433.5 448v1M434.5 235v1M434.5 446v2M435.5 236v2M435.5 445v1M436.5 238v1M436.5 443v2M437.5 239v2M437.5 442v1M438.5 241v2M438.5 440v2M439.5 243v1M439.5 438v2M440.5 244v2M440.5 437v1M441.5 246v1M441.5 435v2M442.5 248v1M442.5 434v1M443.5 249v2M443.5 432v2M444.5 251v1M444.5 430v2M445.5 252v2M445.5 429v1M446.5 254v2M446.5 427v2M447.5 256v3M447.5 424v3M448.5 259v3M448.5 421v3M449.5 262v2M449.5 418v1M449.5 420v1M450.5 264v3M450.5 415v2M451.5 267v3M451.5 412v3M452.5 270v3M452.5 410v2M453.5 273v3M453.5 407v3M454.5 276v3M454.5 404v3M455.5 279v3M455.5 401v3M456.5 282v2M456.5 341v1M456.5 398v3M457.5 284v3M457.5 395v3M458.5 287v3M458.5 392v3M459.5 290v3M459.5 390v2M460.5 293v1M460.5 295v1M460.5 387v3M461.5 296v7M461.5 380v7M462.5 303v9M462.5 371v9M463.5 312v5M463.5 318v2M463.5 362v8M464.5 320v9M464.5 353v9M465.5 329v9M465.5 344v9M466.5 338v3M466.5 342v2M482.5 341v1M508.5 341v1M533.5 341v1M689.5 471v1M714.5 471v1M724.5 341v1M733.5 210v1M740.5 471v1M750.5 341v1M758.5 210v1M765.5 471v1M775.5 341v1M784.5 210v1M791.5 471v1M801.5 341v1M809.5 210v1M816.5 471v1M826.5 341v1M835.5 210v1M842.5 471v1M852.5 341v1M860.5 210v1M867.5 471v1M877.5 341v1M886.5 210v1M893.5 471v1M903.5 341v1M912.5 210v1M919.5 471v1"/>
<path stroke="#00ffff" d="M723.5 157v1M723.5 272v1M723.5 424v1M723.5 539v1M724.5 156v1M724.5 271v1M724.5 423v1M724.5 538v1M725.5 155v1M725.5 270v1M725.5 422v1M725.5 537v1M726.5 154v1M726.5 269v1M726.5 421v1M726.5 536v1M727.5 153v1M727.5 268v1M727.5 420v1M727.5 535v1M728.5 267v1M728.5 419v1M728.5 534v1M729.5 266v1M729.5 418v1M729.5 533v1M730.5 265v1M730.5 417v1M730.5 532v1M731.5 264v1M731.5 416v1M731.5 531v1M732.5 263v1M732.5 415v1M732.5 529v2M733.5 262v1M733.5 413v2M733.5 528v1M734.5 261v1M734.5 412v1M734.5 527v1M735.5 260v1M735.5 411v1M735.5 526v1M736.5 259v1M736.5 410v1M736.5 525v1M737.5 258v1M737.5 409v1M737.5 524v1M738.5 256v2M738.5 408v1M738.5 523v1M739.5 255v1M739.5 407v1M739.5 522v1M740.5 254v1M740.5 406v1M740.5 521v1M741.5 253v1M741.5 520v1M742.5 252v1M742.5 519v1M743.5 251v1M743.5 518v1M744.5 250v1M744.5 517v1M745.5 249v1M745.5 516v1M746.5 515v1M747.5 514v1M748.5 170v1M748.5 513v1M749.5 169v1M749.5 512v1M750.5 168v1M750.5 511v1M751.5 167v1M752.5 166v1M752.5 548v1M753.5 165v1M753.5 432v1M753.5 547v1M754.5 164v1M754.5 431v1M754.5 546v1M755.5 163v1M755.5 430v1M755.5 545v1M756.5 162v1M756.5 429v1M756.5 544v1M757.5 161v1M757.5 428v1M757.5 543v1M758.5 160v1M758.5 275v1M758.5 427v1M758.5 542v1M759.5 159v1M759.5 274v1M759.5 426v1M759.5 541v1M760.5 158v1M760.5 273v1M760.5 425v1M760.5 540v1M761.5 157v1M761.5 272v1M761.5 424v1M761.5 539v1M762.5 156v1M762.5 271v1M762.5 423v1M762.5 538v1M763.5 155v1M763.5 270v1M763.5 422v1M763.5 537v1M764.5 154v1M764.5 269v1M764.5 421v1M764.5 536v1M765.5 153v1M765.5 268v1M765.5 420v1M765.5 535v1M766.5 267v1M766.5 419v1M766.5 534v1M767.5 266v1M767.5 418v1M767.5 533v1M768.5 265v1M768.5 417v1M768.5 532v1M769.5 264v1M769.5 416v1M769.5 531v1M770.5 263v1M770.5 415v1M770.5 529v2M771.5 262v1M771.5 413v2M771.5 528v1M772.5 261v1M772.5 412v1M772.5 527v1M773.5 260v1M773.5 411v1M773.5 526v1M774.5 259v1M774.5 410v1M774.5 525v1M775.5 258v1M775.5 409v1M775.5 524v1M776.5 256v2M776.5 408v1M776.5 523v1M777.5 255v1M777.5 407v1M777.5 522v1M778.5 254v1M778.5 406v1M778.5 521v1M779.5 253v1M779.5 520v1M780.5 252v1M780.5 519v1M781.5 251v1M781.5 518v1M782.5 250v1M782.5 517v1M783.5 249v1M783.5 516v1M784.5 515v1M785.5 514v1M786.5 170v1M786.5 513v1M787.5 169v1M787.5 512v1M788.5 168v1M788.5 511v1M789.5 167v1M790.5 166v1M790.5 548v1M791.5 165v1M791.5 432v1M791.5 547v1M792.5 164v1M792.5 431v1M792.5 546v1M793.5 163v1M793.5 430v1M793.5 545v1M794.5 162v1M794.5 429v1M794.5 544v1M795.5 161v1M795.5 428v1M795.5 543v1M796.5 160v1M796.5 275v1M796.5 427v1M796.5 542v1M797.5 159v1M797.5 274v1M797.5 426v1M797.5 541v1M798.5 158v1M798.5 273v1M798.5 425v1M798.5 540v1M799.5 157v1M799.5 272v1M799.5 424v1M799.5 539v1M800.5 156v1M800.5 271v1M800.5 423v1M800.5 538v1M801.5 155v1M801.5 270v1M801.5 422v1M801.5 537v1M802.5 154v1M802.5 269v1M802.5 421v1M802.5 536v1M803.5 153v1M803.5 268v1M803.5 420v1M803.5 535v1M804.5 267v1M804.5 419v1M804.5 534v1M805.5 266v1M805.5 418v1M805.5 533v1M806.5 265v1M806.5 417v1M806.5 532v1M807.5 264v1M807.5 416v1M807.5 531v1M808.5 263v1M808.5 415v1M808.5 529v2M809.5 262v1M809.5 413v2M809.5 528v1M810.5 261v1M810.5 412v1M810.5 527v1M811.5 260v1M811.5 411v1M811.5 526v1M812.5 259v1M812.5 410v1M812.5 525v1M813.5 258v1M813.5 409v1M813.5 524v1M814.5 256v2M814.5 408v1M814.5 523v1M815.5 255v1M815.5 407v1M815.5 522v1M816.5 254v1M816.5 406v1M816.5 521v1M817.5 253v1M817.5 520v1M818.5 252v1M818.5 519v1M819.5 251v1M819.5 518v1M820.5 250v1M820.5 517v1M821.5 249v1M821.5 516v1M822.5 515v1M823.5 514v1M824.5 170v1M824.5 513v1M825.5 169v1M825.5 512v1M826.5 168v1M826.5 511v1M827.5 167v1M828.5 166v1M828.5 548v1M829.5 165v1M829.5 432v1M829.5 547v1M830.5 164v1M830.5 431v1M830.5 546v1M831.5 163v1M831.5 430v1M831.5 545v1M832.5 162v1M832.5 429v1M832.5 544v1M833.5 161v1M833.5 428v1M833.5 543v1M834.5 160v1M834.5 275v1M834.5 427v1M834.5 542v1M835.5 159v1M835.5 274v1M835.5 426v1M835.5 541v1M836.5 158v1M836.5 273v1M836.5 425v1M836.5 540v1M837.5 157v1M837.5 272v1M837.5 424v1M837.5 539v1M838.5 156v1M838.5 271v1M838.5 423v1M838.5 538v1M839.5 155v1M839.5 270v1M839.5 422v1M839.5 537v1M840.5 154v1M840.5 269v1M840.5 421v1M840.5 536v1M841.5 153v1M841.5 268v1M841.5 420v1M841.5 535v1M842.5 267v1M842.5 419v1M842.5 534v1M843.5 266v1M843.5 418v1M843.5 533v1M844.5 265v1M844.5 417v1M844.5 532v1M845.5 264v1M845.5 416v1M845.5 531v1M846.5 263v1M846.5 415v1M846.5 529v2M847.5 262v1M847.5 413v2M847.5 528v1M848.5 261v1M848.5 412v1M848.5 527v1M849.5 260v1M849.5 411v1M849.5 526v1M850.5 259v1M850.5 410v1M850.5 525v1M851.5 258v1M851.5 409v1M851.5 524v1M852.5 256v2M852.5 408v1M852.5 523v1M853.5 255v1M853.5 407v1M853.5 522v1M854.5 254v1M854.5 406v1M854.5 521v1M855.5 253v1M855.5 520v1M856.5 252v1M856.5 519v1M857.5 251v1M857.5 518v1M858.5 250v1M858.5 517v1M859.5 249v1M859.5 516v1M860.5 515v1M861.5 514v1M862.5 170v1M862.5 513v1M863.5 169v1M863.5 512v1M864.5 168v1M864.5 511v1M865.5 167v1M866.5 166v1M866.5 548v1M867.5 165v1M867.5 432v1M867.5 547v1M868.5 164v1M868.5 431v1M868.5 546v1M869.5 163v1M869.5 430v1M869.5 545v1M870.5 162v1M870.5 429v1M870.5 544v1M871.5 161v1M871.5 428v1M871.5 543v1M872.5 160v1M872.5 275v1M872.5 427v1M872.5 542v1M873.5 159v1M873.5 274v1M873.5 426v1M873.5 541v1M874.5 158v1M874.5 273v1M874.5 425v1M874.5 540v1M875.5 157v1M875.5 272v1M875.5 424v1M875.5 539v1M876.5 156v1M876.5 271v1M876.5 423v1M876.5 538v1M877.5 155v1M877.5 270v1M877.5 422v1M877.5 537v1M878.5 154v1M878.5 269v1M878.5 421v1M878.5 536v1M879.5 153v1M879.5 268v1M879.5 420v1M879.5 535v1M880.5 267v1M880.5 419v1M880.5 534v1M881.5 266v1M881.5 418v1M881.5 533v1M882.5 265v1M882.5 417v1M882.5 532v1M883.5 264v1M883.5 416v1M883.5 531v1M884.5 263v1M884.5 415v1M884.5 529v2M885.5 262v1M885.5 413v2M885.5 528v1M886.5 261v1M886.5 412v1M886.5 527v1M887.5 260v1M887.5 411v1M887.5 526v1M888.5 259v1M888.5 410v1M888.5 525v1M889.5 258v1M889.5 409v1M889.5 524v1M890.5 256v2M890.5 408v1M890.5 523v1"/>
</svg>
<div id="tb">
<div class="cb" style="left:0px;width:67px"></div>
<div class="cb" style="left:98px;width:98px"></div>
<div class="cb" style="left:216px;width:148px"></div>
<div class="cb" style="left:372px;width:158px"></div>
<div class="cb" style="left:538px;width:123px"></div>
<div class="sep" style="left:70px"></div>
<div class="sep" style="left:367px"></div>
<div class="sep" style="left:533px"></div>
<div class="sep" style="left:664px"></div>
<div class="gw" style="left:201px;width:6px"></div><div class="gw" style="left:208px;width:3px"></div><div class="grip" style="left:200px"></div><div class="grip" style="left:207px"></div><div class="grip" style="left:211px"></div><div class="ul"></div>
<svg class="ar" style="left:56px" width="8" height="5" viewBox="0 0 8 5" shape-rendering="crispEdges"><polygon points="0,0 7,0 3.5,4" fill="#000"/><rect x="0" y="0" width="7" height="1" fill="#000"/><rect x="1" y="1" width="5" height="1" fill="#000"/><rect x="2" y="2" width="3" height="1" fill="#000"/><rect x="3" y="3" width="1" height="1" fill="#000"/></svg>
<svg class="ar" style="left:185px" width="8" height="5" viewBox="0 0 8 5" shape-rendering="crispEdges"><polygon points="0,0 7,0 3.5,4" fill="#000"/><rect x="0" y="0" width="7" height="1" fill="#000"/><rect x="1" y="1" width="5" height="1" fill="#000"/><rect x="2" y="2" width="3" height="1" fill="#000"/><rect x="3" y="3" width="1" height="1" fill="#000"/></svg>
<svg class="ar" style="left:353px" width="8" height="5" viewBox="0 0 8 5" shape-rendering="crispEdges"><polygon points="0,0 7,0 3.5,4" fill="#000"/><rect x="0" y="0" width="7" height="1" fill="#000"/><rect x="1" y="1" width="5" height="1" fill="#000"/><rect x="2" y="2" width="3" height="1" fill="#000"/><rect x="3" y="3" width="1" height="1" fill="#000"/></svg>
<svg class="ar" style="left:519px" width="8" height="5" viewBox="0 0 8 5" shape-rendering="crispEdges"><polygon points="0,0 7,0 3.5,4" fill="#000"/><rect x="0" y="0" width="7" height="1" fill="#000"/><rect x="1" y="1" width="5" height="1" fill="#000"/><rect x="2" y="2" width="3" height="1" fill="#000"/><rect x="3" y="3" width="1" height="1" fill="#000"/></svg>
<svg class="ar" style="left:650px" width="8" height="5" viewBox="0 0 8 5" shape-rendering="crispEdges"><polygon points="0,0 7,0 3.5,4" fill="#000"/><rect x="0" y="0" width="7" height="1" fill="#000"/><rect x="1" y="1" width="5" height="1" fill="#000"/><rect x="2" y="2" width="3" height="1" fill="#000"/><rect x="3" y="3" width="1" height="1" fill="#000"/></svg>
<svg style="position:absolute;left:0;top:0" width="1043" height="16" viewBox="0 0 1043 16" shape-rendering="crispEdges"><path d="M0 1.5h1M1 2.5h1M1 3.5h1M0 4.5h1M0 8.5h2M3 1.5h5M3 2.5h1M3 3.5h1M3 4.5h4M7 5.5h1M7 6.5h1M3 7.5h1M7 7.5h1M4 8.5h3M103 1.5h4M102 2.5h1M106 2.5h1M102 3.5h1M103 4.5h2M105 5.5h1M106 6.5h1M102 7.5h1M106 7.5h1M102 8.5h4M110 2.5h1M110 3.5h1M109 4.5h3M110 5.5h1M110 6.5h1M110 7.5h1M111 8.5h2M116 4.5h2M115 5.5h1M118 5.5h1M116 6.5h3M115 7.5h1M118 7.5h1M116 8.5h4M120 4.5h4M121 5.5h1M124 5.5h1M121 6.5h1M124 6.5h1M121 7.5h1M124 7.5h1M120 8.5h3M124 8.5h2M129 1.5h2M130 2.5h1M130 3.5h1M128 4.5h3M127 5.5h1M130 5.5h1M127 6.5h1M130 6.5h1M127 7.5h1M130 7.5h1M128 8.5h4M134 4.5h2M133 5.5h1M136 5.5h1M134 6.5h3M133 7.5h1M136 7.5h1M134 8.5h4M139 4.5h2M142 4.5h2M140 5.5h2M140 6.5h1M140 7.5h1M139 8.5h3M147 1.5h2M148 2.5h1M148 3.5h1M146 4.5h3M145 5.5h1M148 5.5h1M145 6.5h1M148 6.5h1M145 7.5h1M148 7.5h1M146 8.5h4M235 2.5h4M236 3.5h1M239 3.5h1M236 4.5h1M239 4.5h1M236 5.5h3M236 6.5h1M239 6.5h1M236 7.5h1M239 7.5h1M236 8.5h1M239 8.5h1M235 9.5h4M241 5.5h3M245 5.5h2M242 6.5h1M245 6.5h1M242 7.5h1M244 7.5h1M243 8.5h2M243 9.5h1M243 10.5h1M241 11.5h2M247 2.5h3M248 3.5h1M248 4.5h1M248 5.5h1M248 6.5h1M248 7.5h1M248 8.5h1M252 8.5h1M247 9.5h6M255 5.5h2M254 6.5h1M257 6.5h1M255 7.5h3M254 8.5h1M257 8.5h1M255 9.5h4M259 5.5h3M263 5.5h2M260 6.5h1M263 6.5h1M260 7.5h1M262 7.5h1M261 8.5h2M261 9.5h1M261 10.5h1M259 11.5h2M267 5.5h2M266 6.5h1M269 6.5h1M266 7.5h4M266 8.5h1M267 9.5h3M272 5.5h2M275 5.5h2M273 6.5h2M273 7.5h1M273 8.5h1M272 9.5h3M441 2.5h4M442 3.5h1M445 3.5h1M442 4.5h1M445 4.5h1M442 5.5h3M442 6.5h1M445 6.5h1M442 7.5h1M445 7.5h1M442 8.5h1M445 8.5h1M441 9.5h4M447 5.5h3M451 5.5h2M448 6.5h1M451 6.5h1M448 7.5h1M450 7.5h1M449 8.5h2M449 9.5h1M449 10.5h1M447 11.5h2M453 2.5h3M454 3.5h1M454 4.5h1M454 5.5h1M454 6.5h1M454 7.5h1M454 8.5h1M458 8.5h1M453 9.5h6M461 5.5h2M460 6.5h1M463 6.5h1M461 7.5h3M460 8.5h1M463 8.5h1M461 9.5h4M465 5.5h3M469 5.5h2M466 6.5h1M469 6.5h1M466 7.5h1M468 7.5h1M467 8.5h2M467 9.5h1M467 10.5h1M465 11.5h2M473 5.5h2M472 6.5h1M475 6.5h1M472 7.5h4M472 8.5h1M473 9.5h3M478 5.5h2M481 5.5h2M479 6.5h2M479 7.5h1M479 8.5h1M478 9.5h3M582 2.5h4M583 3.5h1M586 3.5h1M583 4.5h1M586 4.5h1M583 5.5h3M583 6.5h1M586 6.5h1M583 7.5h1M586 7.5h1M583 8.5h1M586 8.5h1M582 9.5h4M588 5.5h3M592 5.5h2M589 6.5h1M592 6.5h1M589 7.5h1M591 7.5h1M590 8.5h2M590 9.5h1M590 10.5h1M588 11.5h2M594 2.5h3M595 3.5h1M595 4.5h1M595 5.5h1M595 6.5h1M595 7.5h1M595 8.5h1M599 8.5h1M594 9.5h6M602 5.5h2M601 6.5h1M604 6.5h1M602 7.5h3M601 8.5h1M604 8.5h1M602 9.5h4M606 5.5h3M610 5.5h2M607 6.5h1M610 6.5h1M607 7.5h1M609 7.5h1M608 8.5h2M608 9.5h1M608 10.5h1M606 11.5h2M614 5.5h2M613 6.5h1M616 6.5h1M613 7.5h4M613 8.5h1M614 9.5h3M619 5.5h2M622 5.5h2M620 6.5h2M620 7.5h1M620 8.5h1M619 9.5h3" stroke="#000" stroke-width="1" fill="none"/></svg>
<div style="position:absolute;left:221px;top:1px;width:8px;height:8px;background:#0f0;border:1px solid #000"></div>
<div style="position:absolute;left:376px;top:6px;width:60px;height:1px;background:#000"></div>
<div style="position:absolute;left:542px;top:6px;width:35px;height:1px;background:#000"></div>
<div style="position:absolute;left:669px;top:0;width:100px;height:15px;background:#eeeeee"></div>
<div style="position:absolute;left:769px;top:0;width:18px;height:16px;background:#fff"></div>
<div style="position:absolute;left:668px;top:0;width:1px;height:16px;background:#d8d8d8"></div>
<div style="position:absolute;left:669px;top:15px;width:100px;height:1px;background:#f8f8f8"></div>
<div style="position:absolute;left:667px;top:16px;width:125px;height:2px;background:#a8a8a8"></div>
<div style="position:absolute;left:787px;top:0;width:1px;height:17px;background:#a8a8a8"></div>
<div style="position:absolute;left:788px;top:0;width:3px;height:17px;background:#f6f6f6"></div>
<div style="position:absolute;left:791px;top:0;width:1px;height:18px;background:#a8a8a8"></div>
<div style="position:absolute;left:792px;top:0;width:1px;height:18px;background:#f6f6f6"></div>
<svg class="ar" style="left:776px" width="8" height="5" viewBox="0 0 8 5" shape-rendering="crispEdges"><polygon points="0,0 7,0 3.5,4" fill="#a0a0a0"/><rect x="0" y="0" width="7" height="1" fill="#a0a0a0"/><rect x="1" y="1" width="5" height="1" fill="#a0a0a0"/><rect x="2" y="2" width="3" height="1" fill="#a0a0a0"/><rect x="3" y="3" width="1" height="1" fill="#a0a0a0"/></svg>
<svg style="position:absolute;left:76px;top:0" width="18" height="15" viewBox="0 0 18 15">
<rect x="1" y="1" width="14" height="13" fill="#5b83bb"/>
<rect x="1" y="1" width="9" height="3" fill="#5585f0"/>
<rect x="2" y="2" width="7" height="1" fill="#86a9ff"/>
<rect x="1" y="13" width="14" height="1" fill="#41689f"/>
<g fill="#f4f8ff"><rect x="2" y="4" width="3" height="2"/><rect x="6" y="4" width="3" height="2"/><rect x="10" y="4" width="3" height="2"/>
<rect x="2" y="7" width="3" height="2"/><rect x="6" y="7" width="3" height="2" fill="#c9dcff"/><rect x="10" y="7" width="3" height="2" fill="#c9dcff"/>
<rect x="2" y="10" width="3" height="2"/><rect x="6" y="10" width="3" height="2" fill="#c9dcff"/><rect x="10" y="10" width="3" height="2" fill="#c9dcff"/></g>
<path d="M3.5 9 L8.5 4.5 L10.5 6.5 L8 8.5 Z" fill="#000"/>
<path d="M9.5 5.5 L12.5 2.5" stroke="#1f4a3a" stroke-width="1.6"/>
<path d="M8.8 4.8 L11.8 1.8" stroke="#fff" stroke-width="0.9" stroke-dasharray="1 0.6"/>
<path d="M12 2.8 L15.5 -1" stroke="#d98a35" stroke-width="3.4"/>
<path d="M12.5 1.5 L15 -1" stroke="#f5c27a" stroke-width="1.2"/>
</svg>
<svg style="position:absolute;left:0;top:0" width="1043" height="16" viewBox="0 0 1043 16" shape-rendering="crispEdges" fill="none"><path d="M679 1.5h1M681 1.5h1M683 1.5h7M679 2.5h1M681 2.5h1M685 2.5h1M679 3.5h1M681 3.5h1M683 3.5h6M679 4.5h2M682 4.5h1M685 4.5h1M688 4.5h1M679 5.5h2M685 5.5h4M679 6.5h1M681 6.5h3M685 6.5h1M688 6.5h1M679 7.5h1M681 7.5h1M683 7.5h1M685 7.5h4M679 8.5h1M681 8.5h1M683 8.5h1M685 8.5h1M688 8.5h1M679 9.5h2M683 9.5h1M685 9.5h1M687 9.5h2M679 10.5h1M683 10.5h1M679 11.5h1M682 11.5h1M684 11.5h6M693 1.5h1M695 1.5h1M698 1.5h3M692 2.5h1M694 2.5h1M696 2.5h1M699 2.5h1M694 3.5h1M697 3.5h6M692 4.5h6M701 4.5h1M692 5.5h3M697 5.5h1M699 5.5h1M701 5.5h1M692 6.5h1M697 6.5h1M699 6.5h1M701 6.5h1M692 7.5h4M697 7.5h1M699 7.5h1M701 7.5h1M692 8.5h1M697 8.5h1M699 8.5h1M701 8.5h1M692 9.5h1M695 9.5h1M698 9.5h1M700 9.5h1M691 10.5h2M694 10.5h1M697 10.5h1M701 10.5h1M691 11.5h1M693 11.5h2M696 11.5h1M701 11.5h1M705 1.5h7M704 2.5h1M711 2.5h1M703 3.5h1M710 3.5h1M704 4.5h9M704 5.5h1M708 5.5h1M712 5.5h1M704 6.5h1M708 6.5h1M712 6.5h1M704 7.5h9M704 8.5h1M704 9.5h1M713 9.5h1M704 10.5h1M713 10.5h1M705 11.5h9" stroke="#fbfbfb"/><path d="M678 0.5h1M680 0.5h1M682 0.5h7M678 1.5h1M680 1.5h1M684 1.5h1M678 2.5h1M680 2.5h1M682 2.5h6M678 3.5h2M681 3.5h1M684 3.5h1M687 3.5h1M678 4.5h2M684 4.5h4M678 5.5h1M680 5.5h3M684 5.5h1M687 5.5h1M678 6.5h1M680 6.5h1M682 6.5h1M684 6.5h4M678 7.5h1M680 7.5h1M682 7.5h1M684 7.5h1M687 7.5h1M678 8.5h2M682 8.5h1M684 8.5h1M686 8.5h2M678 9.5h1M682 9.5h1M678 10.5h1M681 10.5h1M683 10.5h6M692 0.5h1M694 0.5h1M697 0.5h3M691 1.5h1M693 1.5h1M695 1.5h1M698 1.5h1M693 2.5h1M696 2.5h6M691 3.5h6M700 3.5h1M691 4.5h3M696 4.5h1M698 4.5h1M700 4.5h1M691 5.5h1M696 5.5h1M698 5.5h1M700 5.5h1M691 6.5h4M696 6.5h1M698 6.5h1M700 6.5h1M691 7.5h1M696 7.5h1M698 7.5h1M700 7.5h1M691 8.5h1M694 8.5h1M697 8.5h1M699 8.5h1M690 9.5h2M693 9.5h1M696 9.5h1M700 9.5h1M690 10.5h1M692 10.5h2M695 10.5h1M700 10.5h1M704 0.5h7M703 1.5h1M710 1.5h1M702 2.5h1M709 2.5h1M703 3.5h9M703 4.5h1M707 4.5h1M711 4.5h1M703 5.5h1M707 5.5h1M711 5.5h1M703 6.5h9M703 7.5h1M703 8.5h1M712 8.5h1M703 9.5h1M712 9.5h1M704 10.5h9" stroke="#6d6d6d"/></svg>
</div>
<div id="bb"><div class="tab"></div><svg style="position:absolute;left:0;top:0" width="120" height="6" viewBox="0 0 120 6" shape-rendering="crispEdges"><path d="M4 2.5h3M5 3.5h1M5 4.5h1M5 5.5h1M12 5.5h2M16 5.5h3M20 5.5h2M24 5.5h2M28 5.5h2M31 5.5h2M36 3.5h1M36 4.5h1M35 5.5h3M41 2.5h3M40 3.5h1M44 3.5h1M44 4.5h1M43 5.5h1" stroke="#000" stroke-width="1" fill="none"/></svg></div>
</body></html>
